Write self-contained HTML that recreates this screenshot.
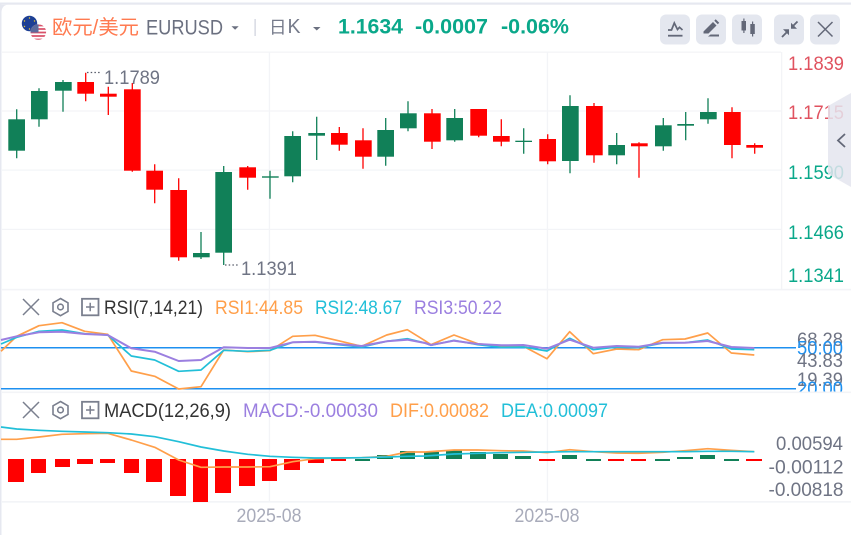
<!DOCTYPE html>
<html><head><meta charset="utf-8">
<style>
html,body{margin:0;padding:0;background:#fff;width:851px;height:535px;overflow:hidden}
svg{display:block;position:absolute;left:0;top:0}
text{font-family:"Liberation Sans","Noto Sans CJK SC",sans-serif;font-size:19px}
.ax{fill:#6f7484}
.ln{fill:none;stroke-width:1.7;stroke-linejoin:round}
.h{font-size:19.5px}
</style></head><body>
<svg width="851" height="535" viewBox="0 0 851 535" xmlns="http://www.w3.org/2000/svg">
<defs>
<clipPath id="c1"><rect x="780" y="292" width="71" height="99.5"/></clipPath>
<clipPath id="us"><circle cx="38.3" cy="32" r="7.8"/></clipPath>
</defs>
<rect width="851" height="535" fill="#fff"/>
<rect y="2.5" width="851" height="2.2" fill="#e6e8f0"/>
<rect y="3" width="1.5" height="532" fill="#e6e8f0"/>
<path d="M0 12V4.700H8Q2 5 1.500 12Z" fill="#e6e8f0"/>
<g fill="#f3f4f7">
<rect x="2" y="51.500" width="779" height="1.300"/>
<rect x="2" y="110.400" width="779" height="1.200"/>
<rect x="2" y="169.500" width="779" height="1.200"/>
<rect x="2" y="228.800" width="779" height="1.200"/>
<rect x="2" y="288.800" width="849" height="1.600"/>
<rect x="2" y="391.500" width="849" height="1.600"/>
<rect x="2" y="501" width="849" height="1.700"/>
<rect x="268.800" y="52" width="1.300" height="450"/>
<rect x="546.800" y="52" width="1.300" height="450"/>
<rect x="781" y="52" width="1.300" height="238"/>
</g>

<!-- header -->
<circle cx="29.500" cy="23.500" r="7.700" fill="#1d3f94"/>
<g fill="#e8c832"><circle cx="29.500" cy="18" r=".7"/><circle cx="34.500" cy="21" r=".7"/><circle cx="24.500" cy="21" r=".7"/><circle cx="34.500" cy="26.500" r=".7"/><circle cx="24.500" cy="26.500" r=".7"/><circle cx="29.500" cy="29" r=".7"/></g>
<circle cx="38.300" cy="32" r="7.800" fill="#fff"/>
<g clip-path="url(#us)"><path d="M30 25.500h17M30 29h17M30 32.500h17M30 36h17M30 39.500h17" stroke="#d9526a" stroke-width="1.700"/><rect x="30" y="24" width="8.500" height="8.500" fill="#5b6a9c"/></g>
<text x="52" y="34" fill="#ff7a50" style="font-size:20px" textLength="87" lengthAdjust="spacingAndGlyphs">欧元/美元</text>
<text x="146" y="34.500" style="font-size:21px" fill="#6b7080" textLength="77" lengthAdjust="spacingAndGlyphs">EURUSD</text>
<path d="M231.500 26.200h7.200l-3.600 3.600z" fill="#6b7080"/>
<rect x="254.500" y="19" width="1.200" height="17" fill="#ccd0dc"/>
<text x="269" y="33.500" style="font-size:17.500px" fill="#757a8a">日</text>
<text x="287.500" y="33" style="font-size:20px" fill="#757a8a" textLength="13" lengthAdjust="spacingAndGlyphs">K</text>
<path d="M313 27h7.500l-3.750 3.500z" fill="#6b7080"/>
<g fill="#0aa88a" font-weight="700">
<text x="338" y="33.500" style="font-size:21px" textLength="65" lengthAdjust="spacingAndGlyphs">1.1634</text>
<text x="415" y="33.500" style="font-size:21px" textLength="73" lengthAdjust="spacingAndGlyphs">-0.0007</text>
<text x="501" y="33.500" style="font-size:21px" textLength="68" lengthAdjust="spacingAndGlyphs">-0.06%</text>
</g>

<!-- buttons -->
<g fill="#e4e7ef">
<rect x="660" y="14.500" width="30" height="30" rx="6"/>
<rect x="696" y="14.500" width="30" height="30" rx="6"/>
<rect x="732" y="14.500" width="30" height="30" rx="6"/>
<rect x="774" y="14.500" width="30" height="30" rx="6"/>
<rect x="810" y="14.500" width="30" height="30" rx="6"/>
</g>
<path d="M668 30l3.500 0 2.800-7 3.200 6.500 2-2.200 3 2.700" fill="none" stroke="#636878" stroke-width="1.700"/>
<rect x="668" y="34.800" width="14.500" height="1.800" fill="#636878"/>
<path d="M703.500 31.500l9.500-9.500 3.500 3.500-8 8h-5zM714.300 20.700l1.400-1.400 3.500 3.500-1.400 1.400zM710.500 34.500h8.500v2h-11z" fill="#636878"/>
<path d="M741.500 21h4.500v9.500h-4.500zM743.300 18.500h1.200v14.500h-1.200zM750.300 24h4.500v10h-4.500zM752 21.500h1.200v15h-1.200z" fill="#636878"/>
<path d="M782 37l4.500-4.500M797.500 21.500l-4.500 4.500" stroke="#636878" stroke-width="1.800" fill="none"/>
<path d="M783 29.200h6v6zM791 28.800v-6l6 6z" fill="#636878"/>
<path d="M818 22l14.500 14.500M832.500 22L818 36.500" stroke="#636878" stroke-width="1.500" fill="none"/>

<!-- candles -->
<g fill="none" stroke="#118058" stroke-width="1.300">
<path d="M16.700 109.300V158.300M39 88.300V126.700M63 80V111.700M201 232V259M223.700 166V265M270 170.700V198.700M292.700 131.300V182.300M316.700 116.700V160M385.700 118V165.700M408 101.300V131.300M454.700 109V141.700M523.700 128.300V153.700M570 95.300V173.300M616.700 133V164.300M663.300 118V150.700M685.700 112V140.300M708 98.300V123.700"/>
</g>
<g fill="none" stroke="#ff0000" stroke-width="1.300">
<path d="M85.700 72.700V101.300M108.300 86.700V115M132.300 83V171.700M154.700 164.300V203.300M178.700 178.300V260.700M247.700 166V189.700M339.300 127V150.700M363 128.300V168.700M432 109V149M478.700 109V137.300M501.300 119.300V146.300M547.700 134.300V164.300M594 103V162.700M639 142.300V177.700M732 107.300V158.300M754.700 143.300V153.700"/>
</g>
<g fill="#118058">
<rect x="8.300" y="119.300" width="16.700" height="31.400"/>
<rect x="31" y="91" width="16.700" height="28.300"/>
<rect x="55" y="82" width="16.700" height="8.700"/>
<rect x="193" y="253" width="16.700" height="4.300"/>
<rect x="215.300" y="172" width="16.700" height="80.700"/>
<rect x="262" y="176.300" width="16.700" height="1.400"/>
<rect x="284.300" y="136" width="16.700" height="40.300"/>
<rect x="308.300" y="133" width="16.700" height="2.700"/>
<rect x="377.300" y="130" width="16.700" height="26.700"/>
<rect x="400" y="113.300" width="16.700" height="15"/>
<rect x="446.300" y="118" width="16.700" height="22.300"/>
<rect x="515.300" y="140.700" width="16.700" height="1.300"/>
<rect x="562" y="106" width="16.700" height="55"/>
<rect x="608.300" y="145" width="16.700" height="10.300"/>
<rect x="655" y="125.300" width="16.700" height="21"/>
<rect x="677.300" y="124" width="16.700" height="1.700"/>
<rect x="700" y="112" width="16.700" height="7.300"/>
</g>
<g fill="#ff0000">
<rect x="77.300" y="82" width="16.700" height="11.700"/>
<rect x="100" y="93.700" width="16.700" height="3"/>
<rect x="124" y="89.300" width="16.700" height="81.400"/>
<rect x="146.300" y="170.700" width="16.700" height="19"/>
<rect x="170.300" y="190" width="16.700" height="67.300"/>
<rect x="239.300" y="167.300" width="16.700" height="10.400"/>
<rect x="331" y="133" width="16.700" height="11.700"/>
<rect x="355" y="140.300" width="16.700" height="16.400"/>
<rect x="424" y="113.300" width="16.700" height="28.400"/>
<rect x="470.300" y="109" width="16.700" height="26.700"/>
<rect x="493" y="136" width="16.700" height="5.700"/>
<rect x="539.300" y="139" width="16.700" height="22.300"/>
<rect x="586" y="106" width="16.700" height="49.300"/>
<rect x="631" y="143.300" width="16.700" height="3"/>
<rect x="724" y="112" width="16.700" height="33"/>
<rect x="746.300" y="145" width="16.700" height="2.700"/>
</g>
<path d="M87 72.500h13M225 265h13" stroke="#555a68" stroke-width="1.200" stroke-dasharray="1.500 2.200" fill="none"/>
<text x="104" y="84" class="ax" textLength="56" lengthAdjust="spacingAndGlyphs">1.1789</text>
<text x="241" y="275" class="ax" textLength="56" lengthAdjust="spacingAndGlyphs">1.1391</text>

<!-- price axis -->
<text x="788" y="70" fill="#e0525f" textLength="56" lengthAdjust="spacingAndGlyphs">1.1839</text>
<text x="788" y="119" fill="#e0525f" textLength="56" lengthAdjust="spacingAndGlyphs">1.1715</text>
<text x="788" y="179" fill="#0aa88a" textLength="56" lengthAdjust="spacingAndGlyphs">1.1590</text>
<text x="788" y="239" fill="#0aa88a" textLength="56" lengthAdjust="spacingAndGlyphs">1.1466</text>
<text x="788" y="282" fill="#0aa88a" textLength="56" lengthAdjust="spacingAndGlyphs">1.1341</text>
<path d="M851 93L828 106V174L851 187Z" fill="#e4e5ee" fill-opacity=".85"/>
<path d="M845 134l-7 6.500 7 6.500" fill="none" stroke="#636878" stroke-width="1.800"/>

<!-- RSI -->
<g fill="none" stroke="#7a7f8e" stroke-width="1.500">
<path d="M23 299l16 16M39 299l-16 16"/>
<path d="M60.500 298.500l7.500 4.300v8.600l-7.500 4.300-7.500-4.300v-8.600z" stroke-width="1.600"/>
<circle cx="60.500" cy="307" r="2.800" stroke-width="1.600"/>
<rect x="82" y="298.800" width="16.500" height="16.500" stroke-width="1.800"/>
<path d="M86 307h8.500M90.200 302.800v8.500"/>
</g>
<text x="104" y="314" class="h" fill="#333" textLength="99" lengthAdjust="spacingAndGlyphs">RSI(7,14,21)</text>
<text x="215" y="314" class="h" fill="#ff9f4a" textLength="88" lengthAdjust="spacingAndGlyphs">RSI1:44.85</text>
<text x="315" y="314" class="h" fill="#22bfd8" textLength="87" lengthAdjust="spacingAndGlyphs">RSI2:48.67</text>
<text x="414" y="314" class="h" fill="#9b7fe0" textLength="88" lengthAdjust="spacingAndGlyphs">RSI3:50.22</text>

<rect x="1" y="347" width="795" height="1.500" fill="#1e90f0"/>
<rect x="1" y="388" width="795" height="1.500" fill="#1e90f0"/>
<polyline class="ln" stroke="#ff9f4a" points="1,351.300 16.700,336.300 39,325.700 62,322.700 84.700,331.300 107.700,334.300 131.300,371 154.700,376.300 178.700,389 201,386.700 223.700,350 247.700,351.700 270,350.700 292.700,336.300 315,335.300 338.300,340.700 361.700,346.300 386.700,335 407.300,329.700 425,340.700 431,344.700 454,335 477.700,343.700 501.300,346.300 523.300,346.300 547,358.700 569.700,331.700 593.300,353.700 616.700,349 638.700,349.700 662.700,339.700 685,339 707.700,333 731.300,353 754.300,355"/>
<polyline class="ln" stroke="#22bfd8" points="1,344 16.700,337.300 39,331.300 62,330 84.700,333.700 107.700,335 131.300,356 154.700,360 178.700,371.300 201,370 223.700,350.300 247.700,351.300 270,350.300 292.700,342.300 315,342 338.300,344.700 361.700,347 386.700,341.300 407.300,338.700 425,343 431,345.300 454,340.300 477.700,344.700 501.300,347.300 523.300,347 547,351 569.700,338.300 593.300,349.700 616.700,347 638.700,347.700 662.700,343 685,342.700 707.700,340 731.300,349 754.300,349.700"/>
<polyline class="ln" stroke="#9b7fe0" style="stroke-width:2" points="1,340 16.700,336.300 39,332.300 62,331.700 84.700,334 107.700,335 131.300,348.300 154.700,351.700 178.700,361 201,360 223.700,347.300 247.700,348 270,348 292.700,342.300 315,341.700 338.300,344 361.700,346 386.700,341.300 407.300,339.700 425,343 431,345 454,340.700 477.700,344 501.300,345.300 523.300,345 547,348.700 569.700,339.700 593.300,347.700 616.700,346 638.700,346.700 662.700,342.700 685,342.700 707.700,341 731.300,347 754.300,348"/>
<g clip-path="url(#c1)">
<text x="797" y="346" class="ax" textLength="46" lengthAdjust="spacingAndGlyphs">68.28</text>
<text x="797" y="354.700" fill="#1e90f0" textLength="46" lengthAdjust="spacingAndGlyphs">50.00</text>
<text x="797" y="367" class="ax" textLength="46" lengthAdjust="spacingAndGlyphs">43.83</text>
<text x="797" y="386" class="ax" textLength="46" lengthAdjust="spacingAndGlyphs">19.39</text>
<text x="797" y="395" fill="#1e90f0" textLength="46" lengthAdjust="spacingAndGlyphs">20.00</text>
</g>

<!-- MACD -->
<g fill="none" stroke="#7a7f8e" stroke-width="1.500">
<path d="M23 402l16 16M39 402l-16 16"/>
<path d="M60.500 401.500l7.500 4.300v8.600l-7.500 4.300-7.500-4.300v-8.600z" stroke-width="1.600"/>
<circle cx="60.500" cy="410" r="2.800" stroke-width="1.600"/>
<rect x="82" y="401.800" width="16.500" height="16.500" stroke-width="1.800"/>
<path d="M86 410h8.500M90.200 405.800v8.500"/>
</g>
<text x="104" y="417" class="h" fill="#333" textLength="127" lengthAdjust="spacingAndGlyphs">MACD(12,26,9)</text>
<text x="243" y="417" class="h" fill="#9b7fe0" textLength="135" lengthAdjust="spacingAndGlyphs">MACD:-0.00030</text>
<text x="390" y="417" class="h" fill="#ff9f4a" textLength="99" lengthAdjust="spacingAndGlyphs">DIF:0.00082</text>
<text x="501" y="417" class="h" fill="#22bfd8" textLength="107" lengthAdjust="spacingAndGlyphs">DEA:0.00097</text>

<g fill="#ff0000">
<rect x="8" y="459" width="16" height="23"/>
<rect x="31" y="459" width="15" height="14"/>
<rect x="55" y="459" width="15" height="8"/>
<rect x="77" y="459" width="16" height="5"/>
<rect x="100" y="459" width="15" height="4"/>
<rect x="124" y="459" width="15" height="14"/>
<rect x="146" y="459" width="16" height="23"/>
<rect x="170" y="459" width="16" height="37"/>
<rect x="193" y="459" width="15" height="43"/>
<rect x="215" y="459" width="16" height="34"/>
<rect x="239" y="459" width="16" height="27"/>
<rect x="262" y="459" width="15" height="22"/>
<rect x="284" y="459" width="16" height="11"/>
<rect x="308" y="459" width="16" height="4"/>
<rect x="331" y="459" width="15" height="2"/>
<rect x="539" y="459" width="16" height="2"/>
<rect x="608" y="459" width="16" height="2"/>
<rect x="631" y="459" width="15" height="2"/>
<rect x="746" y="459" width="16" height="2"/>
</g>
<g fill="#118058">
<rect x="355" y="459" width="15" height="2"/>
<rect x="377" y="455" width="16" height="4"/>
<rect x="400" y="451" width="15" height="8"/>
<rect x="424" y="452" width="15" height="7"/>
<rect x="446" y="450" width="16" height="9"/>
<rect x="470" y="452" width="16" height="7"/>
<rect x="493" y="454" width="15" height="5"/>
<rect x="515" y="456" width="16" height="3"/>
<rect x="562" y="455" width="15" height="4"/>
<rect x="586" y="459" width="15" height="2"/>
<rect x="655" y="459" width="15" height="2"/>
<rect x="677" y="457" width="16" height="2"/>
<rect x="700" y="455" width="15" height="4"/>
<rect x="724" y="459" width="15" height="2"/>
</g>
<polyline class="ln" stroke="#ff9f4a" points="1,439.300 16.700,439.300 39,437 62,434.300 84.700,433.700 107.700,433.300 131.300,440 154.700,447.300 178.700,460 201,467.300 223.700,467 247.700,467 270,466.700 292.700,461.700 315,458.700 338.300,458 361.700,457.700 386.700,456.300 407.300,452 425,452 454,450 477.700,450 501.300,450.700 523.300,451 547,452.700 569.700,449.700 593.300,451.700 616.700,453 638.700,453.300 662.700,452.300 685,450.700 707.700,448.700 731.300,450.300 754.300,451.700"/>
<polyline class="ln" stroke="#22bfd8" points="1,427 16.700,429 39,430.300 62,431.300 84.700,432 107.700,432.700 131.300,434 154.700,436.700 178.700,441.700 201,447 223.700,451 247.700,454.300 270,456.300 292.700,457.300 315,458 338.300,458 361.700,457.700 386.700,457 407.300,456.300 425,456 454,454 477.700,453.300 501.300,452.700 523.300,452.300 547,452 569.700,451.700 593.300,451.700 616.700,451.700 638.700,451.700 662.700,451.700 685,451.700 707.700,451.300 731.300,451.300 754.300,451.700"/>
<text x="776" y="450" class="ax" textLength="67" lengthAdjust="spacingAndGlyphs">0.00594</text>
<text x="768.500" y="473.300" class="ax" textLength="75" lengthAdjust="spacingAndGlyphs">-0.00112</text>
<text x="768.500" y="496" class="ax" textLength="75" lengthAdjust="spacingAndGlyphs">-0.00818</text>

<text x="236.500" y="522" fill="#a8abba" textLength="65" lengthAdjust="spacingAndGlyphs">2025-08</text>
<text x="514.500" y="522" fill="#a8abba" textLength="65" lengthAdjust="spacingAndGlyphs">2025-08</text>
</svg>
</body></html>
